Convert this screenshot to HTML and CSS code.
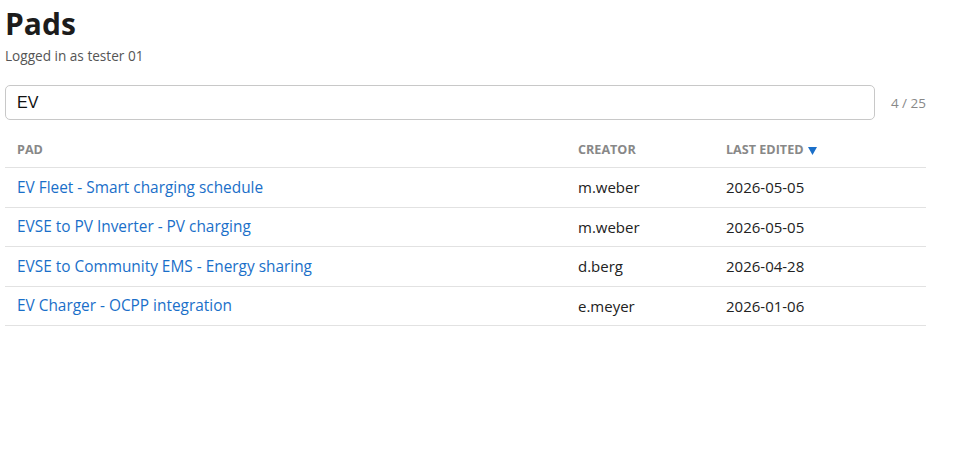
FILE: index.html
```html
<!DOCTYPE html>
<html lang="en">

<head>
  <meta charset="UTF-8">
  <title>Pads</title>
  <link rel="stylesheet" href="styles.css">
</head>

<body>

  <h1 class="title">Pads</h1>
  <p class="subtitle">Logged in as tester 01</p>

  <div class="search-row">
    <input type="text" class="search" value="EV">
    <span class="count">4 / 25</span>
  </div>

  <table class="pads">
    <thead>
      <tr>
        <th class="col-pad">Pad</th>
        <th class="col-creator">Creator</th>
        <th class="col-edited">Last edited
          <svg class="sort" width="9" height="8" viewBox="0 0 9 8"><path d="M0 0h9L4.5 8z" fill="#1a6fc9"/></svg>
        </th>
      </tr>
    </thead>
    <tbody>
      <tr>
        <td><a href="#">EV Fleet - Smart charging schedule</a></td>
        <td>m.weber</td>
        <td>2026-05-05</td>
      </tr>
      <tr>
        <td><a href="#">EVSE to PV Inverter - PV charging</a></td>
        <td>m.weber</td>
        <td>2026-05-05</td>
      </tr>
      <tr>
        <td><a href="#">EVSE to Community EMS - Energy sharing</a></td>
        <td>d.berg</td>
        <td>2026-04-28</td>
      </tr>
      <tr>
        <td><a href="#">EV Charger - OCPP integration</a></td>
        <td>e.meyer</td>
        <td>2026-01-06</td>
      </tr>
    </tbody>
  </table>

</body>

</html>
```

FILE: styles.css
```css
body {
  margin: 0;
  padding: 4px 27px 20px 5px;
  font-family: 'Open Sans', sans-serif;
  font-size: 15px;
  color: #222;
  background: #fff;
}

.title {
  margin: 0;
  font-size: 30px;
  line-height: 40px;
  font-weight: 700;
  color: #1c1c1c;
}

.subtitle {
  margin: 3px 0 0;
  font-size: 13.6px;
  line-height: 18px;
  color: #555;
}

.search-row {
  display: flex;
  align-items: center;
  gap: 16px;
  margin-top: 20px;
}

.search {
  flex: 1;
  height: 35px;
  box-sizing: border-box;
  padding: 0 11px;
  border: 1px solid #c8c8c8;
  border-radius: 5px;
  font-family: 'Liberation Sans', Arial, sans-serif;
  font-size: 16px;
  color: #111;
}

.count {
  font-size: 13.5px;
  color: #888;
}

.pads {
  width: 100%;
  margin-top: 12px;
  border-collapse: collapse;
}

.pads th,
.pads td {
  padding: 0 12px;
  text-align: left;
  line-height: 20px;
  border-bottom: 1px solid #e2e2e2;
}

.pads th {
  height: 35px;
  font-size: 12.6px;
  font-weight: 700;
  text-transform: uppercase;
  color: #888;
}

.pads td {
  height: 38.5px;
}

.col-pad {
  width: 537px;
}

.col-creator {
  width: 124px;
}

.sort {
  margin-left: 1px;
  vertical-align: -1px;
}

.pads a {
  color: #1a6fc9;
  font-size: 15.4px;
  text-decoration: none;
}
```
